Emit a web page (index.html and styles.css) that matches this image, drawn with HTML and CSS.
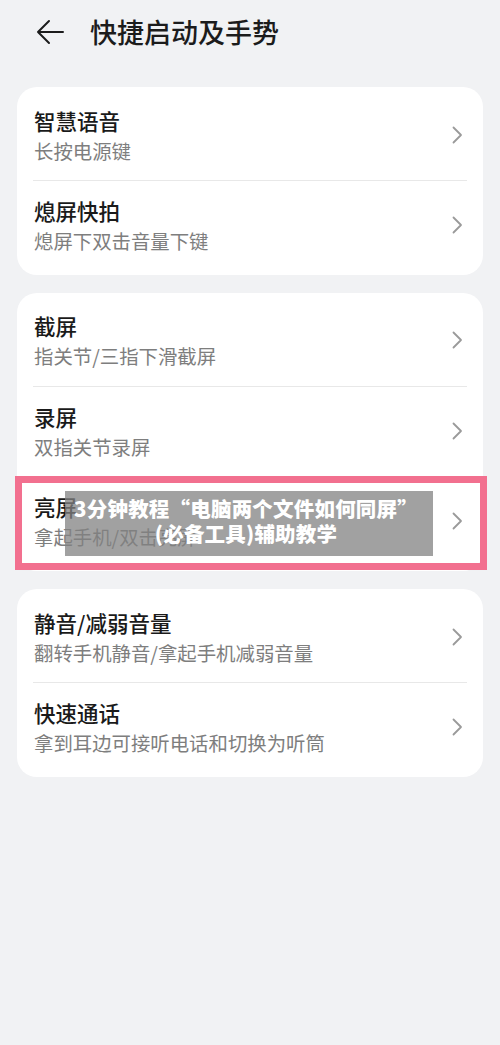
FILE: index.html
```html
<!DOCTYPE html>
<html lang="zh-CN">
<head>
<meta charset="utf-8">
<title>快捷启动及手势</title>
<link rel="stylesheet" href="styles.css">
</head>
<body>
<div class="page">
  <header class="header">
    <svg class="back" width="28" height="26" viewBox="0 0 28 26">
      <path d="M13 2 L2 13 L13 24 M2 13 H27" fill="none" stroke="#1c1c1c" stroke-width="2" stroke-linecap="round" stroke-linejoin="round"/>
    </svg>
    <h1 class="title">快捷启动及手势</h1>
  </header>

  <section class="card">
    <div class="row">
      <div class="text"><div class="t">智慧语音</div><div class="s">长按电源键</div></div>
      <svg class="chev" width="11" height="18" viewBox="0 0 11 18"><path d="M1.5 1.5 L9 9 L1.5 16.5" fill="none" stroke="#9a9a9a" stroke-width="1.8" stroke-linecap="round" stroke-linejoin="round"/></svg>
    </div>
    <div class="divider"></div>
    <div class="row">
      <div class="text"><div class="t">熄屏快拍</div><div class="s">熄屏下双击音量下键</div></div>
      <svg class="chev" width="11" height="18" viewBox="0 0 11 18"><path d="M1.5 1.5 L9 9 L1.5 16.5" fill="none" stroke="#9a9a9a" stroke-width="1.8" stroke-linecap="round" stroke-linejoin="round"/></svg>
    </div>
  </section>

  <section class="card">
    <div class="row">
      <div class="text"><div class="t">截屏</div><div class="s">指关节/三指下滑截屏</div></div>
      <svg class="chev" width="11" height="18" viewBox="0 0 11 18"><path d="M1.5 1.5 L9 9 L1.5 16.5" fill="none" stroke="#9a9a9a" stroke-width="1.8" stroke-linecap="round" stroke-linejoin="round"/></svg>
    </div>
    <div class="divider"></div>
    <div class="row">
      <div class="text"><div class="t">录屏</div><div class="s">双指关节录屏</div></div>
      <svg class="chev" width="11" height="18" viewBox="0 0 11 18"><path d="M1.5 1.5 L9 9 L1.5 16.5" fill="none" stroke="#9a9a9a" stroke-width="1.8" stroke-linecap="round" stroke-linejoin="round"/></svg>
    </div>
    <div class="divider"></div>
    <div class="row highlighted">
      <div class="text"><div class="t">亮屏</div><div class="s">拿起手机/双击亮屏</div></div>
      <svg class="chev" width="11" height="18" viewBox="0 0 11 18"><path d="M1.5 1.5 L9 9 L1.5 16.5" fill="none" stroke="#9a9a9a" stroke-width="1.8" stroke-linecap="round" stroke-linejoin="round"/></svg>
      <div class="frame"></div>
      <div class="caption">3分钟教程“电脑两个文件如何同屏”<br>(必备工具)辅助教学</div>
    </div>
  </section>

  <section class="card">
    <div class="row">
      <div class="text"><div class="t">静音/减弱音量</div><div class="s">翻转手机静音/拿起手机减弱音量</div></div>
      <svg class="chev" width="11" height="18" viewBox="0 0 11 18"><path d="M1.5 1.5 L9 9 L1.5 16.5" fill="none" stroke="#9a9a9a" stroke-width="1.8" stroke-linecap="round" stroke-linejoin="round"/></svg>
    </div>
    <div class="divider"></div>
    <div class="row">
      <div class="text"><div class="t">快速通话</div><div class="s">拿到耳边可接听电话和切换为听筒</div></div>
      <svg class="chev" width="11" height="18" viewBox="0 0 11 18"><path d="M1.5 1.5 L9 9 L1.5 16.5" fill="none" stroke="#9a9a9a" stroke-width="1.8" stroke-linecap="round" stroke-linejoin="round"/></svg>
    </div>
  </section>
</div>
</body>
</html>
```

FILE: styles.css
```css
html, body {
  margin: 0;
  padding: 0;
  background: #f1f2f4;
}
body {
  font-family: "Noto Sans CJK SC", "Noto Sans", sans-serif;
  width: 500px;
  min-height: 1045px;
}
.page {
  display: flex;
  flex-direction: column;
  padding: 0 17px;
}
.header {
  height: 64px;
  display: flex;
  align-items: center;
}
.back {
  margin-left: 19px;
  flex: none;
}
.title {
  margin: 0 0 0 26px;
  font-size: 27px;
  font-weight: 500;
  color: #1c1c1c;
  line-height: 34px;
}
.card {
  background: #ffffff;
  border-radius: 20px;
  padding: 4px 0;
  margin-top: 23px;
  display: flex;
  flex-direction: column;
}
.card + .card {
  margin-top: 18px;
}
.row {
  position: relative;
  display: flex;
  align-items: center;
  padding: 14.7px 20px 14.7px 17px;
}
.text {
  flex: 1;
  display: flex;
  flex-direction: column;
}
.t {
  font-size: 21.5px;
  font-weight: 500;
  color: #1a1a1a;
  line-height: 30px;
}
.s {
  font-size: 19.4px;
  color: #7e7e7e;
  line-height: 30px;
}
.chev {
  flex: none;
  margin-top: -2px;
}
.divider {
  height: 1px;
  background: #e8e8e8;
  margin: 0 16px;
}
.frame {
  position: absolute;
  top: -2px;
  left: -2px;
  right: -4px;
  bottom: -3px;
  border: 7px solid #f2708f;
  pointer-events: none;
}
.caption {
  position: absolute;
  left: 48px;
  top: 13px;
  width: 368px;
  height: 65px;
  box-sizing: border-box;
  padding-top: 5px;
  padding-right: 6px;
  background: rgba(130, 130, 130, 0.75);
  color: #ffffff;
  font-weight: 900;
  font-size: 20.5px;
  line-height: 25px;
  text-align: center;
  letter-spacing: 0.2px;
}
```
